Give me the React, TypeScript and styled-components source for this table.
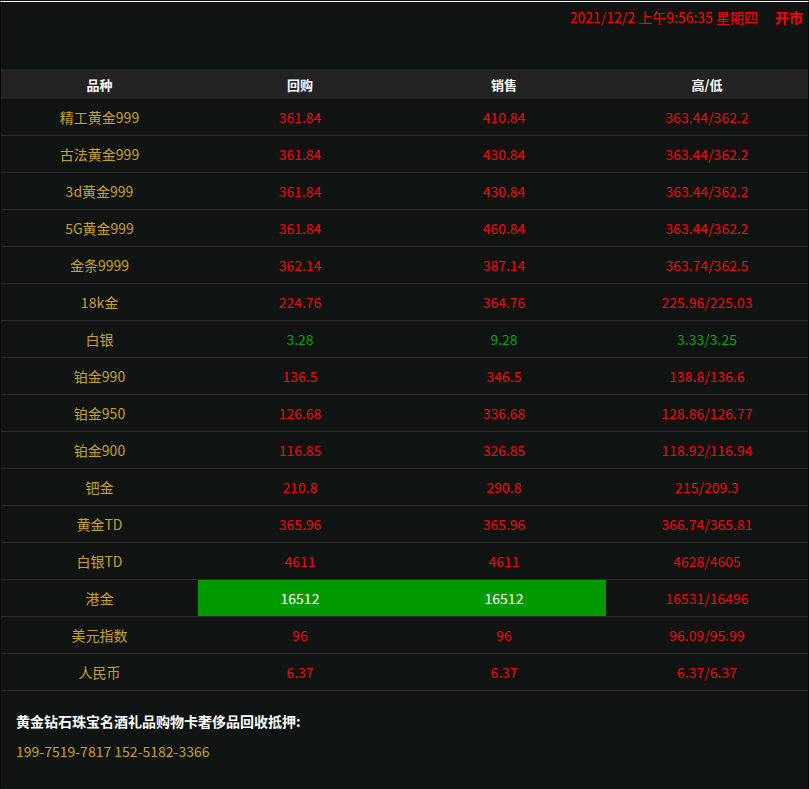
import React from "react";
import styled, { createGlobalStyle } from "styled-components";

const Global = createGlobalStyle`
  html, body { margin: 0; padding: 0; background: #0f1311; }
  body { font-family: "Microsoft YaHei", "Noto Sans CJK SC", "Noto Sans", sans-serif; }
`;

const Page = styled.div`
  margin-top: 1px;
  border-top: 1px solid #ffffff;
  border-left: 1px solid #050605;
  border-right: 1px solid #050605;
  background: #0f1311;
  min-height: 787px;
  box-sizing: border-box;
`;

const TopBar = styled.div`
  height: 67px;
  display: flex;
  justify-content: flex-end;
  align-items: flex-start;
  padding: 5px 5px 0 0;
  box-sizing: border-box;
  color: #ff0000;
  font-size: 14px;
  line-height: 20px;
`;

const Strong = styled.b`
  margin-left: 17px;
  font-weight: 700;
`;

const Row = styled.div<{ $head?: boolean }>`
  display: grid;
  grid-template-columns: 197px 204px 204px 1fr;
  height: ${(p) => (p.$head ? "30px" : "37px")};
  background: ${(p) => (p.$head ? "#232323" : "transparent")};
  border-bottom: ${(p) => (p.$head ? "none" : "1px solid #2e2e2e")};
  box-sizing: border-box;
`;

const Cell = styled.div<{ $color: string; $bg?: string; $bold?: boolean }>`
  display: flex;
  align-items: center;
  justify-content: center;
  color: ${(p) => p.$color};
  background: ${(p) => p.$bg ?? "transparent"};
  font-size: ${(p) => (p.$bold ? "13px" : "14px")};
  font-weight: ${(p) => (p.$bold ? 700 : 400)};
`;

const Footer = styled.div`
  padding: 20px 15px 0;
  font-size: 14px;
`;

const FootTitle = styled.div`
  color: #ffffff;
  font-weight: 700;
  line-height: 20px;
`;

const Phones = styled.div`
  color: #c9a12a;
  margin-top: 10px;
  line-height: 20px;
  font-size: 14px;
`;

const GOLD = "#c9a12a";
const RED = "#ee0a0a";
const GREEN = "#07a507";

type Item = { name: string; buy: string; sell: string; hl: string; color?: string; hot?: boolean };

const data: Item[] = [
  { name: "精工黄金999", buy: "361.84", sell: "410.84", hl: "363.44/362.2" },
  { name: "古法黄金999", buy: "361.84", sell: "430.84", hl: "363.44/362.2" },
  { name: "3d黄金999", buy: "361.84", sell: "430.84", hl: "363.44/362.2" },
  { name: "5G黄金999", buy: "361.84", sell: "460.84", hl: "363.44/362.2" },
  { name: "金条9999", buy: "362.14", sell: "387.14", hl: "363.74/362.5" },
  { name: "18k金", buy: "224.76", sell: "364.76", hl: "225.96/225.03" },
  { name: "白银", buy: "3.28", sell: "9.28", hl: "3.33/3.25", color: GREEN },
  { name: "铂金990", buy: "136.5", sell: "346.5", hl: "138.8/136.6" },
  { name: "铂金950", buy: "126.68", sell: "336.68", hl: "128.86/126.77" },
  { name: "铂金900", buy: "116.85", sell: "326.85", hl: "118.92/116.94" },
  { name: "钯金", buy: "210.8", sell: "290.8", hl: "215/209.3" },
  { name: "黄金TD", buy: "365.96", sell: "365.96", hl: "366.74/365.81" },
  { name: "白银TD", buy: "4611", sell: "4611", hl: "4628/4605" },
  { name: "港金", buy: "16512", sell: "16512", hl: "16531/16496", hot: true },
  { name: "美元指数", buy: "96", sell: "96", hl: "96.09/95.99" },
  { name: "人民币", buy: "6.37", sell: "6.37", hl: "6.37/6.37" },
];

export default function App() {
  return (
    <>
      <Global />
      <Page>
        <TopBar>
          <span>2021/12/2 上午9:56:35 星期四</span>
          <Strong>开市</Strong>
        </TopBar>
        <Row $head>
          <Cell $color="#fff" $bold>品种</Cell>
          <Cell $color="#fff" $bold>回购</Cell>
          <Cell $color="#fff" $bold>销售</Cell>
          <Cell $color="#fff" $bold>高/低</Cell>
        </Row>
        {data.map((d) => {
          const c = d.color ?? RED;
          return (
            <Row key={d.name}>
              <Cell $color={GOLD}>{d.name}</Cell>
              <Cell $color={d.hot ? "#fff" : c} $bg={d.hot ? "#009900" : undefined}>{d.buy}</Cell>
              <Cell $color={d.hot ? "#fff" : c} $bg={d.hot ? "#009900" : undefined}>{d.sell}</Cell>
              <Cell $color={c}>{d.hl}</Cell>
            </Row>
          );
        })}
        <Footer>
          <FootTitle>黄金钻石珠宝名酒礼品购物卡奢侈品回收抵押:</FootTitle>
          <Phones>199-7519-7817 152-5182-3366</Phones>
        </Footer>
      </Page>
    </>
  );
}
